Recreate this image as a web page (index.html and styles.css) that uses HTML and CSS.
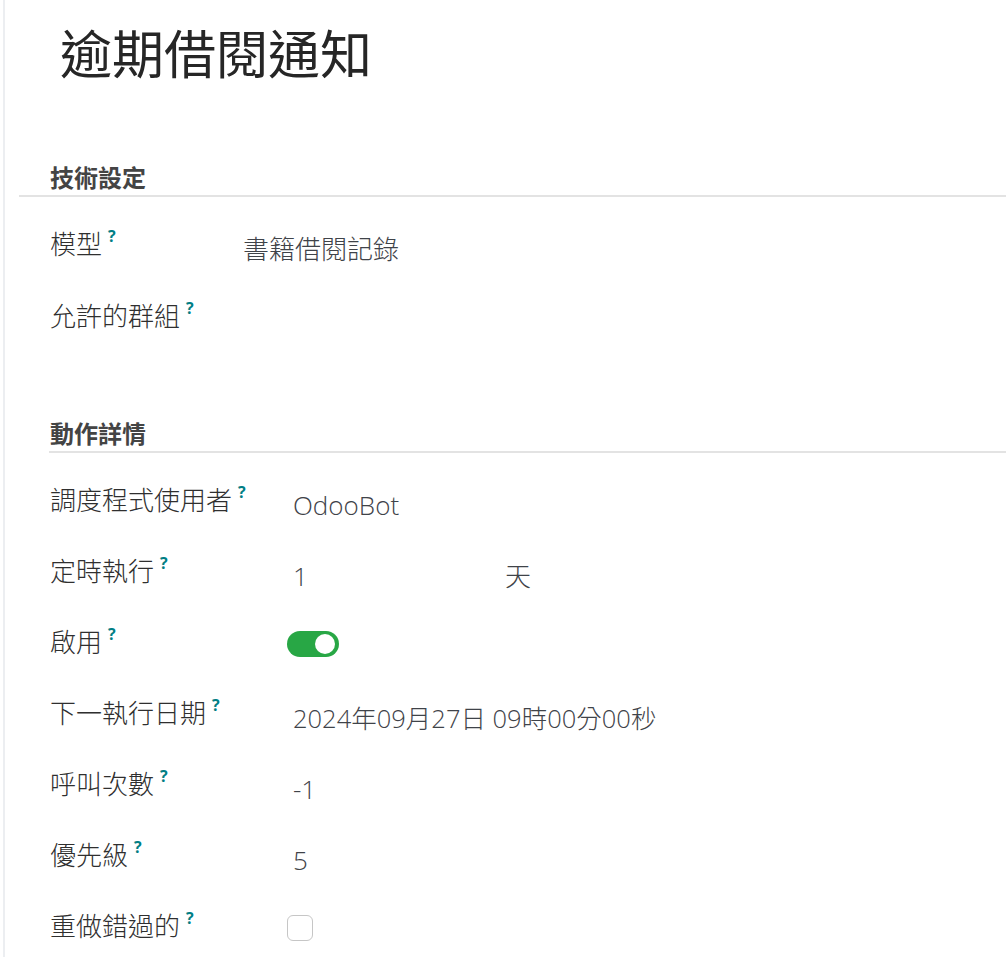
FILE: index.html
```html
<!DOCTYPE html>
<html lang="zh-Hant">
<head>
<meta charset="utf-8">
<title>逾期借閱通知</title>
<link rel="stylesheet" href="styles.css">
</head>
<body>
<div class="sheet">
  <h1 class="title">逾期借閱通知</h1>

  <section class="group group-tech">
    <div class="group-title">技術設定</div>
    <div class="rows rows-tech">
      <div class="row">
        <div class="label">模型<sup class="help">?</sup></div>
        <div class="value">書籍借閱記錄</div>
      </div>
      <div class="row">
        <div class="label">允許的群組<sup class="help">?</sup></div>
        <div class="value"></div>
      </div>
    </div>
  </section>

  <section class="group group-action">
    <div class="group-title">動作詳情</div>
    <div class="rows rows-action">
      <div class="row">
        <div class="label">調度程式使用者<sup class="help">?</sup></div>
        <div class="value">OdooBot</div>
      </div>
      <div class="row">
        <div class="label">定時執行<sup class="help">?</sup></div>
        <div class="value interval"><span class="num">1</span><span class="unit">天</span></div>
      </div>
      <div class="row">
        <div class="label">啟用<sup class="help">?</sup></div>
        <div class="value"><span class="toggle"><span class="knob"></span></span></div>
      </div>
      <div class="row">
        <div class="label">下一執行日期<sup class="help">?</sup></div>
        <div class="value date">2024年09月27日 09時00分00秒</div>
      </div>
      <div class="row">
        <div class="label">呼叫次數<sup class="help">?</sup></div>
        <div class="value">-1</div>
      </div>
      <div class="row">
        <div class="label">優先級<sup class="help">?</sup></div>
        <div class="value">5</div>
      </div>
      <div class="row">
        <div class="label">重做錯過的<sup class="help">?</sup></div>
        <div class="value"><span class="checkbox"></span></div>
      </div>
    </div>
  </section>
</div>
</body>
</html>
```

FILE: styles.css
```css
html, body {
  margin: 0;
  padding: 0;
  background: #ffffff;
}

body {
  font-family: "Open Sans", "Noto Sans CJK TC", sans-serif;
  color: #374151;
  overflow: hidden;
}

.sheet {
  margin-left: 3px;
  border-left: 2px solid #eceef1;
  min-height: 957px;
  box-sizing: border-box;
}

.title {
  margin: 0;
  padding: 23px 0 0 55px;
  font-size: 52px;
  line-height: 62px;
  font-weight: 400;
  color: #262626;
}

.group-title {
  font-size: 24px;
  line-height: 27px;
  height: 31px;
  font-weight: 700;
  color: #444;
  border-bottom: 2px solid #e3e3e3;
}

.group-tech {
  margin-top: 79px;
  margin-left: 14px;
}

.group-tech .group-title {
  padding-left: 31px;
}

.group-action {
  margin-top: 66px;
  margin-left: 44px;
}

.group-action .group-title {
  padding-left: 1px;
}

.rows-tech {
  margin-top: 13px;
  padding-left: 31px;
}

.rows-action {
  margin-top: 13px;
  padding-left: 1px;
}

.row {
  display: grid;
  align-items: center;
  font-size: 26px;
  font-weight: 300;
}

.rows-tech .row {
  grid-template-columns: 193px 1fr;
  height: 72px;
}

.rows-action .row {
  grid-template-columns: 243px 1fr;
  height: 71px;
}

.label {
  color: #2f2f2f;
  white-space: nowrap;
  line-height: 34px;
}

.help {
  font-size: 16px;
  font-weight: 700;
  color: #017e84;
  margin-left: 6px;
  vertical-align: 0;
  position: relative;
  top: -12px;
}

.value {
  color: #3f4349;
  line-height: 34px;
  padding-top: 6px;
  white-space: nowrap;
}

.date {
  font-size: 25.5px;
}

.interval {
  display: flex;
}

.interval .num {
  width: 212px;
}

.toggle {
  display: block;
  width: 52px;
  height: 26px;
  border-radius: 13px;
  background: #28a745;
  margin-left: -6px;
  margin-top: -6px;
  position: relative;
}

.knob {
  position: absolute;
  right: 4px;
  top: 3px;
  width: 20px;
  height: 20px;
  border-radius: 50%;
  background: #fff;
}

.checkbox {
  display: block;
  width: 24px;
  height: 24px;
  border: 1px solid #c6c6c6;
  border-radius: 6px;
  margin-left: -6px;
  margin-top: -6px;
}
```
